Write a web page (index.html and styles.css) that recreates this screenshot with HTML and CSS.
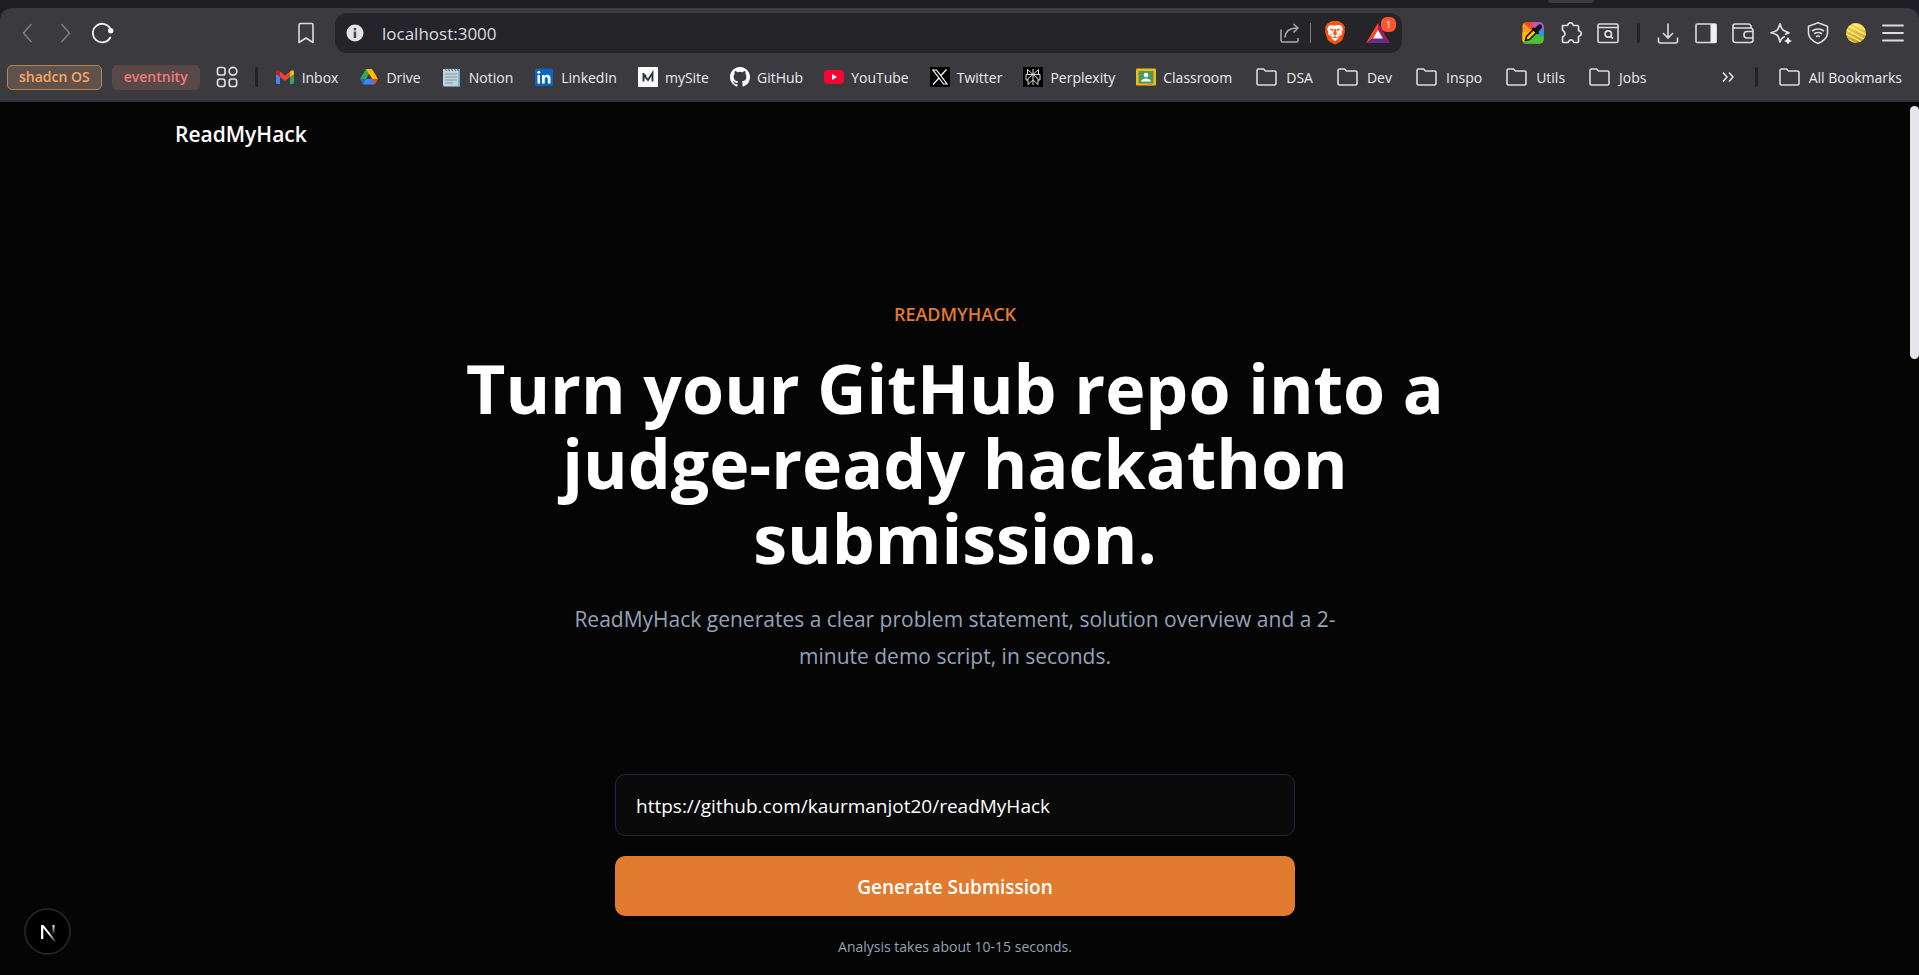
FILE: index.html
```html
<!DOCTYPE html>
<html lang="en">
<head>
    <meta charset="UTF-8">
    <meta name="viewport" content="width=device-width, initial-scale=1.0">
    <title>ReadMyHack</title>
    <link rel="stylesheet" href="styles.css">
</head>
<body>
    <svg class="sprite" aria-hidden="true">
        <symbol id="folder" viewBox="0 0 21 20">
            <path d="M1 16.500v-13Q1 2 2.500 2H7.500L9.500 4H18.500Q20 4 20 5.500V16.500Q20 18 18.500 18H2.500Q1 18 1 16.500z" fill="none" stroke="#dddce0" stroke-width="1.600"/>
        </symbol>
    </svg>

    <div class="browser">
        <div class="tab-strip"><span class="tab-edge"></span></div>

        <header class="chrome">
            <div class="toolbar">
                <div class="toolbar-left">
                    <div class="nav-buttons">
                        <button class="icon-btn" aria-label="Back"><svg width="22" height="22" viewBox="0 0 22 22"><path d="M15.500 2 7.500 11l8 9" fill="none" stroke="#7e7d84" stroke-width="1.500"/></svg></button>
                        <button class="icon-btn" aria-label="Forward"><svg width="22" height="22" viewBox="0 0 22 22"><path d="m7.500 2 8 9-8 9" fill="none" stroke="#7e7d84" stroke-width="1.500"/></svg></button>
                        <button class="icon-btn" aria-label="Reload"><svg width="22" height="22" viewBox="0 0 22 22"><path d="M18.500 7A9.300 9.300 0 1 0 18.300 15.500" fill="none" stroke="#f0f0f2" stroke-width="1.800" stroke-linecap="round"/><circle cx="18.700" cy="8.800" r="2.700" fill="#f5f5f7"/></svg></button>
                    </div>
                    <button class="icon-btn" aria-label="Bookmark"><svg width="22" height="22" viewBox="0 0 22 22"><path d="M5.500 1.500h11q1.500 0 1.500 1.500v17.500l-7-4.500-7 4.500V3q0-1.500 1.500-1.500z" fill="none" stroke="#dddce0" stroke-width="1.600" stroke-linejoin="round"/></svg></button>
                </div>

                <div class="address-bar">
                    <svg width="18" height="18" viewBox="0 0 18 18"><circle cx="9" cy="9" r="8.500" fill="#e3e2e8"/><path d="M7.700 7.500h2.500V14H7.700zM7.700 4h2.500v2.200H7.700z" fill="#47464e"/></svg>
                    <input class="address-input" type="text" value="localhost:3000" aria-label="Address">
                    <button class="icon-btn" aria-label="Share"><svg width="20" height="20" viewBox="0 0 20 20"><path d="M1 6.500v11q0 1.500 1.500 1.500h14q1.500 0 1.500-1.500V15M5 14.500Q5.500 5 17.500 5M13.500 1l4.500 4-4.500 4.500" fill="none" stroke="#aaa9af" stroke-width="1.500"/></svg></button>
                    <span class="address-divider"></span>
                    <button class="icon-btn" aria-label="Shields"><svg width="22" height="24" viewBox="0 0 22 24"><path d="m6 1 2-1h6l2 1 2.500 1.500L21 6l-.5 2.500.5 2-2.500 8Q18 20 11 23.500 4 20 3.500 18.500L1 10.500l.5-2L1 6l2.500-3.500z" fill="#fb5412"/><path d="M5 4.500 8 4l3 .7L14 4l3 .500L19 8l-1.500 3 .5 2-2.500 2-1.500 1 .5 1.500-3.500 2.500-3.500-2.500.5-1.500-1.500-1L4 13l.5-2L3 8z" fill="#fff"/><path d="m6 8 3 .5-.5 1.500zM16 8l-3 .5.500 1.500zM10.500 8h1l1 5-1.500 1.500L9.500 13zM6 12l2 2.500M16 12l-2 2.500M8.500 17l2.500-1.500 2.500 1.500" fill="#fb5412" stroke="#fb5412" stroke-width=".7"/></svg></button>
                    <button class="icon-btn rewards" aria-label="Rewards"><svg width="24" height="20" viewBox="0 0 24 20"><path d="M12 0v7.500L7 15.500 0 20z" fill="#ff4724"/><path d="m12 0 12 20-7-4.500-5-8z" fill="#9e1f63"/><path d="m0 20 7-4.500h10l7 4.500z" fill="#662d91"/><path d="m12 7 5 8.500H7z" fill="#fff"/></svg><span class="rewards-badge">1</span></button>
                </div>

                <div class="toolbar-right">
                    <button class="icon-btn" aria-label="Color picker"><svg width="22" height="22" viewBox="0 0 22 22"><defs><clipPath id="picker"><rect x=".5" y=".5" width="21" height="21" rx="4"/></clipPath></defs><g clip-path="url(#picker)"><path d="M0 0h22v22H0z" fill="#ff9b16"/><path d="M0 0h13v11z" fill="#fb4937"/><path d="M12 0h10v9L11 11z" fill="#b457e8"/><path d="M22 7v9L11 11z" fill="#2299f5"/><path d="M22 15v7H11V11z" fill="#43c52f"/><path d="M0 22 11 11v11z" fill="#43c52f"/><path d="M0 10v12l11-11z" fill="#ffc000"/></g><path d="m3.500 18.500 1-4 7-7 3 3-7 7z" fill="#ffc60b" stroke="#15120d" stroke-width="1.500"/><path d="m11 5.500 2 .5 3-3q2-1.500 3.500 0t0 3.500l-3 3 .5 2-1.500 1-6-5.500z" fill="#15120d"/></svg></button>
                    <button class="icon-btn" aria-label="Extensions"><svg width="22" height="22" viewBox="0 0 22 22"><path d="M2.500 3.500h4.500q1 0 1-1Q8.500.8 10.500.8T13 2.500q0 1 1 1h3.500q1 0 1 1v3.500q0 1 1 1 1.700.5 1.700 2.500t-1.700 2.500q-1 0-1 1v4.500q0 1-1 1h-3q-1 0-1.200-1-.6-1.600-2.300-1.600t-2.300 1.600q-.2 1-1.200 1h-4q-1 0-1-1v-4q0-1 1-1.200 1.500-.6 1.500-2.300T3.500 9q-1-.2-1-1.200z" fill="none" stroke="#dddce0" stroke-width="1.700" stroke-linejoin="round"/></svg></button>
                    <button class="icon-btn" aria-label="Search tabs"><svg width="22" height="22" viewBox="0 0 22 22"><rect x="1" y="2" width="20" height="18.500" rx="1.500" fill="none" stroke="#dddce0" stroke-width="1.600"/><path d="M1 5.500h20m-7.500 9 2.500 2" stroke="#dddce0" stroke-width="1.700"/><circle cx="11.300" cy="12" r="3.200" fill="none" stroke="#dddce0" stroke-width="1.700"/></svg></button>
                    <span class="divider toolbar-divider"></span>
                    <button class="icon-btn" aria-label="Downloads"><svg width="22" height="22" viewBox="0 0 22 22"><path d="M11 1.500V16M6 11l5 5 5-5M1.500 15.500v3.500q0 2 2 2h15q2 0 2-2v-3.500" fill="none" stroke="#dddce0" stroke-width="1.600"/></svg></button>
                    <button class="icon-btn" aria-label="Sidebar"><svg width="22" height="22" viewBox="0 0 22 22"><rect x="1" y="2" width="20" height="18.500" rx="1" fill="none" stroke="#dddce0" stroke-width="1.600"/><path d="M15.500 2H21q.5 0 .5.500V20q0 1-1 1h-5z" fill="#f0eff2"/></svg></button>
                    <button class="icon-btn" aria-label="Wallet"><svg width="22" height="22" viewBox="0 0 22 22"><path d="M1 4V18q0 2.500 2.500 2.500h15q2.500 0 2.500-2.500V9q0-3-2.500-3H3Q1 6 1 4t2-2h13q3 0 3.500 4M21 9.500h-6q-3 0-3 3v.5q0 3 3 3h6" fill="none" stroke="#dddce0" stroke-width="1.600"/></svg></button>
                    <button class="icon-btn" aria-label="Leo AI"><svg width="22" height="22" viewBox="0 0 22 22"><path d="M15 14.500Q11.500 15.500 10 20 8.500 14 7 13T1 10.800Q6 9.500 7.300 8T10 1.800Q11.500 7 13 8t6 2.800q-3 .7-4 1.700" fill="none" stroke="#dddce0" stroke-width="1.700" stroke-linejoin="round"/><path d="M18 15q1 3 4 4-3 .7-4 3.500-1-2.800-4-3.500 3-1 4-4z" fill="#f0eff2"/></svg></button>
                    <button class="icon-btn" aria-label="VPN"><svg width="22" height="22" viewBox="0 0 22 22"><path d="m11 .8 9.500 3.500V11q0 6.500-9.500 10.500Q1.500 17.500 1.500 11V4.300zM5 9q6-4 12 0M7 11.800q4-2.500 8 0M9 14.500q2-1 4 0" fill="none" stroke="#dddce0" stroke-width="1.600"/></svg></button>
                    <button class="icon-btn" aria-label="Profile"><svg width="22" height="22" viewBox="0 0 22 22"><defs><linearGradient id="gold" x2="0" y2="1"><stop stop-color="#ffe24e"/><stop offset="1" stop-color="#c59a12"/></linearGradient><clipPath id="ball"><circle cx="11" cy="11" r="10"/></clipPath></defs><circle cx="11" cy="11" r="10" fill="url(#gold)"/><path clip-path="url(#ball)" d="m5 0 20 10M2 3l20 10.500M0 7l20 10.500M0 11.500l18 9M-2 15l15 7.500" stroke="#fff4bd" stroke-width="1.100"/></svg></button>
                    <button class="icon-btn" aria-label="Menu"><svg width="22" height="22" viewBox="0 0 22 22"><path d="M1 3.500h20M1 11h20M1 18.500h20" stroke="#dddce0" stroke-width="1.800" stroke-linecap="round"/></svg></button>
                </div>
            </div>

            <nav class="bookmarks">
                <button class="tab-group tab-group-orange">shadcn OS</button>
                <button class="tab-group tab-group-red">eventnity</button>
                <button class="icon-btn apps" aria-label="All groups"><svg width="22" height="22" viewBox="0 0 22 22" fill="none" stroke="#dddce0" stroke-width="1.700"><rect x="1.500" y="1.500" width="7.500" height="7.500" rx="2"/><circle cx="17" cy="5.300" r="3.900"/><rect x="1.500" y="13" width="7.500" height="7.500" rx="2.500"/><rect x="13.200" y="13" width="7.500" height="7.500" rx="2.500"/></svg></button>
                <span class="divider"></span>

                <div class="bookmark-list">
                    <a class="bookmark" href="#"><svg viewBox="0 0 20 20"><path d="M1 4.500 5 7.500V17H2.500Q1 17 1 15.500z" fill="#4285f4"/><path d="M15 7.500 19 4.500v11q0 1.500-1.500 1.500H15z" fill="#34a853"/><path d="M5 4.500 10 8.500l5-4V10l-5 4-5-4z" fill="#ea4335"/><path d="M1 5.500Q1 3 3 3.300L5 4.500V10L1 7z" fill="#c5221f"/><path d="M19 5.500Q19 3 17 3.300L15 4.500V10l4-3z" fill="#fbbc04"/></svg>Inbox</a>
                    <a class="bookmark" href="#"><svg viewBox="0 0 20 20"><path d="M7 2h6l-3 5.500-5.500 10L1 12z" fill="#34a853"/><path d="M7 2h6l6 10h-6z" fill="#fbbc04"/><path d="m1 12 3 5.500 3-5.500z" fill="#1967d2"/><path d="m4 17.500 3-5.500h6l3 5.500z" fill="#4285f4"/><path d="m13 12h6l-3 5.500z" fill="#ea4335"/><path d="M10 7l3 5H7z" fill="#3b3a3f"/></svg>Drive</a>
                    <a class="bookmark" href="#"><svg viewBox="0 0 20 20"><path d="M1 2h16.500l.5 17.500H2.500Q1 19.500 1 18z" fill="#bed3dc"/><path d="M16.500 2h1.500v15.500q0 2-2 2z" fill="#69ace0"/><path d="M3 7h12M3 10h12M3 13h12M3 16h8" stroke="#8199a3" stroke-width="1.100"/><path d="m3 1 1.500 3M6 1l1.500 3M9 1l1.500 3M12 1l1.500 3M15 1l1.500 3" stroke="#4b606b"/></svg>Notion</a>
                    <a class="bookmark" href="#"><svg viewBox="0 0 20 20"><rect x="1" y="1.500" width="18" height="17.500" rx="1.500" fill="#0a66c2"/><path d="M3.500 8H6v8.500H3.500zM8 8h2.500v1.200Q11.200 7.800 13.200 7.800 16.500 7.800 16.500 11.500v5h-2.700V12q0-2-1.500-2T10.700 12v4.500H8z" fill="#fff"/><circle cx="4.800" cy="5.300" r="1.500" fill="#fff"/></svg>LinkedIn</a>
                    <a class="bookmark" href="#"><svg viewBox="0 0 20 20"><path d="M0 0h20v20H0z" fill="#fafafa"/><path d="M5.500 14.500V8l4.500 5 4.500-7v8.500M5 6.500l3 3" fill="none" stroke="#273b46" stroke-width="1.900"/></svg>mySite</a>
                    <a class="bookmark" href="#"><svg viewBox="0 0 16 16"><path d="M8 0C3.580 0 0 3.580 0 8c0 3.540 2.290 6.530 5.470 7.590.4.070.55-.17.55-.38 0-.19-.01-.82-.01-1.490-2.010.37-2.530-.49-2.690-.94-.09-.23-.48-.94-.82-1.130-.28-.15-.68-.52-.01-.53.630-.01 1.080.58 1.230.82.720 1.210 1.870.87 2.330.66.070-.52.280-.87.510-1.070-1.780-.2-3.640-.89-3.640-3.950 0-.87.310-1.590.82-2.150-.08-.2-.36-1.020.08-2.120 0 0 .67-.21 2.200.82a7.500 7.500 0 0 1 4 0c1.530-1.040 2.200-.82 2.200-.82.440 1.100.160 1.920.08 2.120.510.560.820 1.270.820 2.150 0 3.070-1.870 3.750-3.650 3.950.290.250.540.730.540 1.480 0 1.070-.01 1.930-.01 2.200 0 .210.150.460.550.380A8.010 8.010 0 0 0 16 8c0-4.420-3.580-8-8-8z" fill="#fff"/></svg>GitHub</a>
                    <a class="bookmark" href="#"><svg viewBox="0 0 20 20"><rect y="3" width="20" height="14" rx="4" fill="#ff0033"/><path d="m8 7 5 3-5 3z" fill="#fff"/></svg>YouTube</a>
                    <a class="bookmark" href="#"><svg viewBox="0 0 20 20"><path d="M0 0h20v20H0z" fill="#000"/><path d="M3 3h3.500L17 17h-3.500zM16.500 2.500l-6 6.500M3 17.500 9 11" fill="none" stroke="#fff" stroke-width="1.200"/></svg>Twitter</a>
                    <a class="bookmark" href="#"><svg viewBox="0 0 20 20"><path d="M0 0h20v20H0z" fill="#000"/><path d="M10 2v16M4.500 2.500 10 7.500l5.500-5v5h-11zM4.500 7.500H3V13h2v4.500l5-4.500 5 4.500V13h2V7.500h-1.500M5 13v-1.500L10 7.500l5 4V13" fill="none" stroke="#ddd"/></svg>Perplexity</a>
                    <a class="bookmark" href="#"><svg viewBox="0 0 20 20"><rect y="1.500" width="20" height="17" rx="1" fill="#f6b90d"/><path d="M2.500 4h15v12.500h-15z" fill="#4b9b60"/><path d="M5 14.500q1-3 5-3t5 3z" fill="#fff"/><circle cx="10" cy="8" r="2.300" fill="#fff"/><path d="M11 16.500h5v2h-5z" fill="#d89b0a"/></svg>Classroom</a>
                    <a class="bookmark folder" href="#"><svg><use href="#folder"/></svg>DSA</a>
                    <a class="bookmark folder" href="#"><svg><use href="#folder"/></svg>Dev</a>
                    <a class="bookmark folder" href="#"><svg><use href="#folder"/></svg>Inspo</a>
                    <a class="bookmark folder" href="#"><svg><use href="#folder"/></svg>Utils</a>
                    <a class="bookmark folder" href="#"><svg><use href="#folder"/></svg>Jobs</a>
                </div>

                <div class="bookmarks-end">
                    <button class="icon-btn" aria-label="More bookmarks"><svg width="12" height="12" viewBox="0 0 12 12"><path d="m1 1.500 4 4.500-4 4.500M7 1.500 11 6l-4 4.500" fill="none" stroke="#e6e5e9" stroke-width="1.600"/></svg></button>
                    <span class="divider"></span>
                    <a class="bookmark folder" href="#"><svg><use href="#folder"/></svg>All Bookmarks</a>
                </div>
            </nav>
        </header>

        <div class="page">
            <div class="site-header">
                <a class="brand" href="#">ReadMyHack</a>
            </div>

            <main class="hero">
                <p class="eyebrow">READMYHACK</p>
                <h1 class="hero-title">Turn your GitHub repo into a judge-ready hackathon submission.</h1>
                <p class="hero-text">ReadMyHack generates a clear problem statement, solution overview and a 2-minute demo script, in seconds.</p>

                <form class="repo-form">
                    <input class="repo-input" type="text" value="https://github.com/kaurmanjot20/readMyHack" aria-label="GitHub repository URL">
                    <button class="submit-btn" type="button">Generate Submission</button>
                    <p class="form-note">Analysis takes about 10-15 seconds.</p>
                </form>
            </main>

            <button class="dev-badge" aria-label="Next.js dev tools"><svg width="18" height="20" viewBox="0 0 18 20"><defs><linearGradient id="stem" x2="0" y2="1"><stop stop-color="#fff"/><stop offset="1" stop-color="#fff" stop-opacity="0"/></linearGradient><linearGradient id="diag" x1=".5" y1=".5" x2="1" y2="1"><stop stop-color="#fff"/><stop offset="1" stop-color="#fff" stop-opacity=".1"/></linearGradient></defs><path d="M2 17V3h2.500L17 19l-1.500 1L4.300 6v11z" fill="url(#diag)"/><path d="M13.500 3h2v10h-2z" fill="url(#stem)"/></svg></button>
            <div class="scroll-thumb"></div>
        </div>
    </div>
</body>
</html>
```
FILE: styles.css
```css
* {
    box-sizing: border-box;
}

body {
    margin: 0;
    background: #050505;
    color: #fff;
    font-family: "Open Sans", "Noto Sans", sans-serif;
}

button,
input {
    font-family: inherit;
}

a {
    color: inherit;
    text-decoration: none;
}

p,
h1 {
    margin: 0;
}

svg {
    display: block;
    flex-shrink: 0;
}

.sprite {
    position: absolute;
    width: 0;
    height: 0;
}

.browser {
    display: flex;
    flex-direction: column;
    height: 100vh;
    overflow: hidden;
    background: #1f1e24;
}

/* Browser chrome */
.tab-strip {
    display: flex;
    justify-content: flex-end;
    height: 8px;
    padding-right: 325px;
}

.tab-edge {
    width: 46px;
    height: 3px;
    background: #3b3a3f;
    border-radius: 0 0 6px 6px;
}

.chrome {
    background: #3b3a3f;
    border-radius: 12px 12px 0 0;
    border-bottom: 2px solid #303035;
}

.toolbar {
    display: grid;
    grid-template-columns: 335px 1fr 517px;
    align-items: center;
    height: 50px;
}

.toolbar-left {
    display: flex;
    justify-content: space-between;
    padding: 0 18px 0 16px;
}

.nav-buttons {
    display: flex;
    gap: 16px;
}

.icon-btn {
    display: flex;
    align-items: center;
    padding: 0;
    border: none;
    background: none;
    cursor: pointer;
}

.address-bar {
    display: flex;
    align-items: center;
    height: 40px;
    padding: 0 12px 0 11px;
    background: #252429;
    border-radius: 12px;
}

.address-input {
    flex: 1;
    min-width: 0;
    padding: 0 18px;
    border: none;
    outline: none;
    background: none;
    color: #dddce0;
    font-size: 17px;
}

.address-divider {
    width: 1px;
    height: 20px;
    margin: 0 13px 0 10px;
    background: #7b7a80;
}

.rewards {
    position: relative;
    margin-left: 20px;
}

.rewards-badge {
    position: absolute;
    top: -6px;
    right: -6px;
    width: 15px;
    height: 15px;
    border-radius: 6px;
    background: #ff5530;
    color: #fff;
    font-size: 9px;
    line-height: 15px;
    text-align: center;
}

.toolbar-right {
    display: flex;
    align-items: center;
    justify-content: space-between;
    padding: 0 15px 0 120px;
}

.divider {
    width: 3px;
    height: 20px;
    border-radius: 2px;
    background: #232227;
}

.toolbar-divider {
    margin: 0 2px;
}

.bookmarks {
    display: flex;
    align-items: center;
    height: 42px;
    padding: 0 17px 4px 7px;
    font-size: 14px;
    white-space: nowrap;
}

.tab-group {
    height: 25px;
    padding: 0 11px;
    border: 1px solid transparent;
    border-radius: 5px;
    font-size: 14px;
    font-weight: 600;
    line-height: 20px;
}

.tab-group-orange {
    border-color: #b98358;
    background: #60524b;
    color: #f7a665;
}

.tab-group-red {
    margin-left: 10px;
    background: #594848;
    color: #ee7d75;
}

.apps {
    margin: 0 17px 0 16px;
}

.bookmark-list {
    display: flex;
    gap: 21px;
    margin-left: 17px;
}

.bookmark {
    display: flex;
    align-items: center;
    gap: 7px;
    color: #ececef;
}

.bookmark svg {
    width: 20px;
    height: 20px;
}

.folder {
    gap: 9px;
}

.folder svg {
    width: 21px;
}

.bookmark-list .folder {
    margin-left: 3px;
}

.bookmarks-end {
    display: flex;
    align-items: center;
    gap: 21px;
    margin-left: auto;
}

/* Page */
.page {
    position: relative;
    flex: 1;
    min-height: 0;
    padding-right: 9px;
    overflow: hidden;
    background: #050505;
}

.site-header {
    max-width: 1600px;
    margin: 0 auto;
    padding: 16px 20px;
}

.brand {
    font-size: 21px;
    font-weight: 600;
    line-height: 32px;
}

.hero {
    display: flex;
    flex-direction: column;
    align-items: center;
    padding: 136px 20px 0;
    text-align: center;
}

.eyebrow {
    color: #e07b30;
    font-size: 18px;
    font-weight: 600;
    line-height: 24px;
}

.hero-title {
    max-width: 1120px;
    margin-top: 24px;
    font-size: 68px;
    font-weight: 700;
    line-height: 75px;
}

.hero-text {
    max-width: 800px;
    margin-top: 26px;
    color: #94a3b8;
    font-size: 21px;
    line-height: 37px;
}

.repo-form {
    width: 100%;
    max-width: 680px;
    margin-top: 99px;
}

.repo-input {
    display: block;
    width: 100%;
    height: 62px;
    padding: 2px 20px 0;
    border: 1px solid #1e293b;
    border-radius: 10px;
    outline: none;
    background: #0a0a0a;
    color: #fff;
    font-size: 19px;
}

.submit-btn {
    display: block;
    width: 100%;
    height: 60px;
    margin-top: 20px;
    padding: 2px 20px 0;
    border: none;
    border-radius: 10px;
    background: #e07b30;
    color: #fff;
    font-size: 19px;
    font-weight: 600;
    cursor: pointer;
}

.form-note {
    margin-top: 21px;
    color: #94a3b8;
    font-size: 14px;
    line-height: 20px;
}

.dev-badge {
    position: absolute;
    bottom: 20px;
    left: 24px;
    display: flex;
    align-items: center;
    justify-content: center;
    width: 47px;
    height: 47px;
    padding: 0;
    border: 2px solid #222;
    border-radius: 50%;
    background: #000;
}

.scroll-thumb {
    position: absolute;
    top: 4px;
    right: 0;
    width: 9px;
    height: 253px;
    border-radius: 5px;
    background: #e6e5eb;
}
```
